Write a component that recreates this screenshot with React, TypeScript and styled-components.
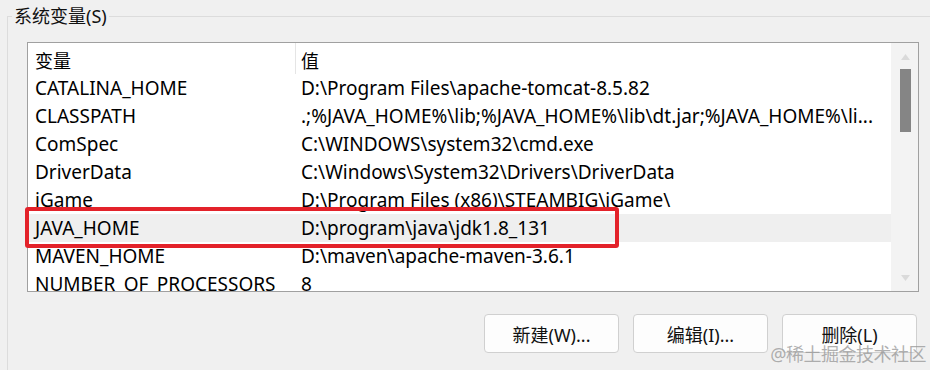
import React from "react";
import styled, { createGlobalStyle } from "styled-components";

const GlobalStyle = createGlobalStyle`
  html, body {
    margin: 0;
    padding: 0;
    background: #f0f0f0;
    overflow: hidden;
  }
  body {
    font-family: "Noto Sans", "Noto Sans CJK SC", sans-serif;
    font-size: 18px;
    color: #000;
  }
`;

const Page = styled.div`
  position: relative;
  width: 930px;
  height: 370px;
  overflow: hidden;
`;

const Group = styled.fieldset`
  margin: 5px 0 0 7px;
  padding: 0 0 0 19px;
  width: 1000px;
  height: 420px;
  box-sizing: border-box;
  border: 1px solid #dcdcdc;
  min-width: 0;
`;

const Caption = styled.legend`
  padding: 0 2px;
  margin-left: -15px;
  line-height: 22px;
  height: 22px;
  color: #111;
`;

const Frame = styled.div`
  position: relative;
  margin-top: 15px;
  width: 892px;
  height: 250px;
  box-sizing: border-box;
  border: 1px solid #a0a0a0;
  background: #fff;
  display: flex;
`;

const Table = styled.div`
  flex: 1;
  overflow: hidden;
  font-size: 19px;
`;

const HeaderRow = styled.div`
  display: grid;
  grid-template-columns: 267px 1fr;
  height: 31px;
  font-size: 18px;
`;

const HeaderCell = styled.div<{ $divider?: boolean }>`
  display: flex;
  align-items: center;
  padding-left: ${(p) => (p.$divider ? "5px" : "7px")};
  padding-top: 2px;
  border-left: ${(p) => (p.$divider ? "1px solid #e5e5e5" : "none")};
`;

const Row = styled.div<{ $selected?: boolean }>`
  display: grid;
  grid-template-columns: 267px 1fr;
  height: 28px;
  background: ${(p) => (p.$selected ? "#efefef" : "transparent")};
`;

const Cell = styled.div<{ $value?: boolean }>`
  display: flex;
  align-items: center;
  padding-left: ${(p) => (p.$value ? "6px" : "7px")};
  white-space: nowrap;
  overflow: hidden;
`;

const Scrollbar = styled.div`
  width: 27px;
  background: #f3f3f3;
  display: flex;
  flex-direction: column;
  align-items: center;
  padding: 11px 0 10px;
  box-sizing: border-box;
`;

const Thumb = styled.div`
  width: 11px;
  height: 63px;
  margin-top: 9px;
  margin-left: 2px;
  background: #858585;
`;

const Arrow = styled.svg<{ $down?: boolean }>`
  margin-left: 2px;
  margin-top: ${(p) => (p.$down ? "auto" : "0")};
`;

const Mark = styled.div`
  position: absolute;
  left: -3px;
  top: 164px;
  width: 594px;
  height: 41px;
  box-sizing: border-box;
  border: 4px solid #e3222a;
  border-radius: 3px;
  pointer-events: none;
`;

const Buttons = styled.div`
  display: flex;
  justify-content: flex-end;
  gap: 14px;
  width: 890px;
  margin-top: 22px;
`;

const Button = styled.button`
  width: 135px;
  height: 39px;
  background: #fdfdfd;
  border: 1px solid #d0d0d0;
  border-radius: 4px;
  font-family: inherit;
  font-size: 18px;
  color: #111;
  padding: 0;
`;

const Watermark = styled.div`
  position: absolute;
  right: 4px;
  bottom: 4px;
  font-size: 18px;
  color: rgba(150, 150, 150, 0.75);
  letter-spacing: -0.5px;
  pointer-events: none;
`;

const vars = [
  ["CATALINA_HOME", "D:\\Program Files\\apache-tomcat-8.5.82"],
  ["CLASSPATH", ".;%JAVA_HOME%\\lib;%JAVA_HOME%\\lib\\dt.jar;%JAVA_HOME%\\li..."],
  ["ComSpec", "C:\\WINDOWS\\system32\\cmd.exe"],
  ["DriverData", "C:\\Windows\\System32\\Drivers\\DriverData"],
  ["iGame", "D:\\Program Files (x86)\\STEAMBIG\\iGame\\"],
  ["JAVA_HOME", "D:\\program\\java\\jdk1.8_131"],
  ["MAVEN_HOME", "D:\\maven\\apache-maven-3.6.1"],
  ["NUMBER_OF_PROCESSORS", "8"],
];

export default function App() {
  return (
    <Page>
      <GlobalStyle />
      <Group>
        <Caption>系统变量(S)</Caption>
        <Frame>
          <Table>
            <HeaderRow>
              <HeaderCell>变量</HeaderCell>
              <HeaderCell $divider>值</HeaderCell>
            </HeaderRow>
            {vars.map(([name, value]) => (
              <Row key={name} $selected={name === "JAVA_HOME"}>
                <Cell>{name}</Cell>
                <Cell $value>{value}</Cell>
              </Row>
            ))}
          </Table>
          <Scrollbar>
            <Arrow width="9" height="6" viewBox="0 0 9 6">
              <path d="M0 6 L4.5 0 L9 6 Z" fill="#dadada" />
            </Arrow>
            <Thumb />
            <Arrow $down width="9" height="6" viewBox="0 0 9 6">
              <path d="M0 0 L4.5 6 L9 0 Z" fill="#dadada" />
            </Arrow>
          </Scrollbar>
          <Mark />
        </Frame>
        <Buttons>
          <Button>新建(W)...</Button>
          <Button>编辑(I)...</Button>
          <Button>删除(L)</Button>
        </Buttons>
      </Group>
      <Watermark>@稀土掘金技术社区</Watermark>
    </Page>
  );
}
